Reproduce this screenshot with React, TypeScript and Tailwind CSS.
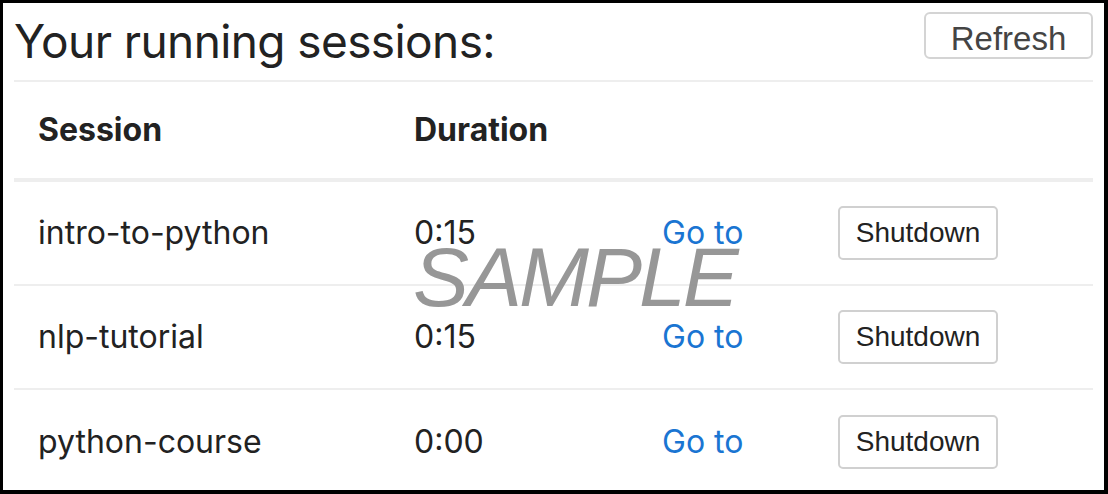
import React from 'react'

const sessions = [
  { name: 'intro-to-python', duration: '0:15' },
  { name: 'nlp-tutorial', duration: '0:15' },
  { name: 'python-course', duration: '0:00' },
]

export default function App() {
  return (
    <div className="relative w-[1108px] h-[494px] bg-white border-l-[3px] border-t-[3px] border-r-[4px] border-b-[4px] border-black text-[#222] font-['Inter',sans-serif] overflow-hidden">
      <div className="px-[11px]">
        {/* Title */}
        <div className="flex items-center justify-between h-[77px]">
          <h1 className="text-[46px] leading-none tracking-[-0.6px] mt-[-2px]">Your running sessions:</h1>
          <button className="h-[47px] w-[169px] mt-[-13px] border-2 border-[#d4d4d4] rounded-[6px] text-[33px] text-[#444] font-['Liberation_Sans',sans-serif]">
            Refresh
          </button>
        </div>

        {/* Table */}
        <div className="border-t-2 border-[#eeeeee]">
          <div className="flex items-center h-[100px] border-b-[4px] border-[#eeeeee] text-[32px] font-bold">
            <div className="w-[400px] pl-[24px]">Session</div>
            <div>Duration</div>
          </div>
          {sessions.map((s, i) => (
            <div
              key={s.name}
              className={`flex items-center h-[104px] text-[32px] ${i < sessions.length - 1 ? 'border-b-2 border-[#eeeeee]' : ''}`}
            >
              <div className="w-[400px] pl-[24px]">{s.name}</div>
              <div className="w-[248px]">{s.duration}</div>
              <a href="#" className="w-[176px] text-[#1a75d2]">Go to</a>
              <button className="h-[54px] w-[160px] border-2 border-[#d0d0d0] rounded-[5px] text-[28px] text-[#222] font-['Liberation_Sans',sans-serif]">
                Shutdown
              </button>
            </div>
          ))}
        </div>
      </div>

      {/* Watermark */}
      <div className="absolute left-[410px] top-[232px] text-[84px] italic leading-none tracking-[-3px] text-[#8c8c8c]/90 font-['Liberation_Sans',sans-serif] pointer-events-none">
        SAMPLE
      </div>
    </div>
  )
}
